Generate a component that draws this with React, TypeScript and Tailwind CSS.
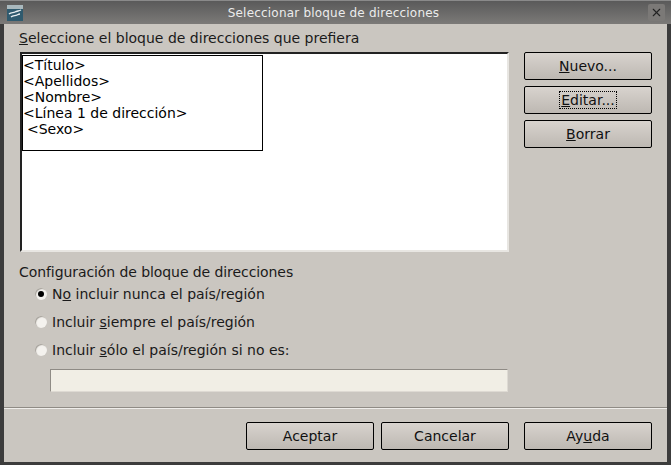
import React from 'react';
import { X } from 'lucide-react';

const font = { fontFamily: '"DejaVu Sans", sans-serif' };

const Btn: React.FC<{ children: React.ReactNode; focused?: boolean }> = ({ children, focused }) => (
  <button className="w-[128px] h-[28px] p-[3px] rounded-[2px] border border-black bg-gradient-to-b from-[#d8d3ce] to-[#bdb8b2] text-[14px] leading-none text-[#111] flex items-center justify-center">
    <span className={focused ? 'px-[1px] py-[1px] outline-1 outline-dotted outline-black' : ''}>{children}</span>
  </button>
);

const Radio: React.FC<{ checked?: boolean; children: React.ReactNode }> = ({ checked, children }) => (
  <div className="flex items-center h-[28px]">
    <span className="w-[12px] h-[12px] rounded-full bg-[#f4f2ee] shadow-[inset_1px_1px_1px_#a29e97] flex items-center justify-center">
      {checked && <span className="w-[6px] h-[6px] rounded-full bg-black" />}
    </span>
    <span className="ml-[5px] text-[14px] text-[#1a1a1a]">{children}</span>
  </div>
);

export default function App() {
  return (
    <div style={font} className="w-[671px] h-[465px] flex flex-col bg-[#3c3c3c] overflow-hidden">
      {/* barra de titulo */}
      <div className="h-[24px] shrink-0 flex items-center border-t border-[#8a8a8a] bg-gradient-to-b from-[#5a5a5a] to-[#7c7a78] relative">
        <svg width="16" height="16" viewBox="0 0 16 16" className="ml-[7px] shrink-0">
          <rect width="16" height="16" fill="#2f5a6e" />
          <rect width="16" height="4" fill="#a9b8bd" />
          <path d="M2 9 C4 7 6 8 8 7 C10 6 12 6 14 5 M4 12 C6 10 8 11 10 10 C11 9.500 12 9 13 9" fill="none" stroke="#e8eef0" strokeWidth="1.300" />
        </svg>
        <span className="flex-1 text-center pr-[4px] text-[12px] text-[#ececec] tracking-[0.2px]">Seleccionar bloque de direcciones</span>
        <span className="w-[17px] h-[17px] mr-[6px] rounded-[2px] bg-[#7b7977] flex items-center justify-center text-[#222]">
          <X size={13} strokeWidth={2} />
        </span>
      </div>

      <div className="flex-1 mx-[4px] mb-[3px] flex flex-col bg-[#cac6c0]">
        <div className="flex-1 flex flex-col px-[15px]">
          <div className="h-[28px] flex items-center text-[14px] text-[#1a1a1a]">
            <span><u>S</u>eleccione el bloque de direcciones que prefiera</span>
          </div>
          <div className="flex justify-between">
            <div>
              {/* lista */}
              <div className="ml-[1px] w-[489px] h-[200px] bg-white border-2 border-t-[#222] border-l-[#222] border-r-[#e8e6e2] border-b-[#e8e6e2] pt-[1px]">
                <div className="w-[241px] h-[96px] border border-black pt-[1px] text-[14px] leading-[16px] text-black">
                  <div>&lt;Título&gt;</div>
                  <div>&lt;Apellidos&gt;</div>
                  <div>&lt;Nombre&gt;</div>
                  <div>&lt;Línea 1 de dirección&gt;</div>
                  <div className="pl-[4px]">&lt;Sexo&gt;</div>
                </div>
              </div>
              <div className="mt-[12px] h-[16px] flex items-center text-[14px] tracking-[-0.08px] text-[#1a1a1a]">Configuración de bloque de direcciones</div>
              <div className="pl-[16px]">
                <Radio checked>N<u>o</u> incluir nunca el país/región</Radio>
                <Radio>Incluir <u>s</u>iempre el país/región</Radio>
                <Radio>Incluir <u>s</u>ólo el país/región si no es:</Radio>
                <div className="mt-[5px] ml-[15px] w-[458px] h-[23px] bg-[#f1eee5] border border-t-[#8f8b85] border-l-[#8f8b85] border-r-[#dedad3] border-b-[#dedad3]" />
              </div>
            </div>
            <div className="flex flex-col gap-[6px]">
              <Btn><u>N</u>uevo...</Btn>
              <Btn focused><u>E</u>ditar...</Btn>
              <Btn><u>B</u>orrar</Btn>
            </div>
          </div>
        </div>
        <div className="h-[2px] shrink-0 border-t border-[#8f8b85] bg-[#efedea]" />
        <div className="h-[53px] shrink-0 flex justify-end pt-[13px] pr-[15px]">
          <Btn>Aceptar</Btn>
          <div className="ml-[7px]"><Btn>Cancelar</Btn></div>
          <div className="ml-[15px]"><Btn>Ay<u>u</u>da</Btn></div>
        </div>
      </div>
    </div>
  );
}
